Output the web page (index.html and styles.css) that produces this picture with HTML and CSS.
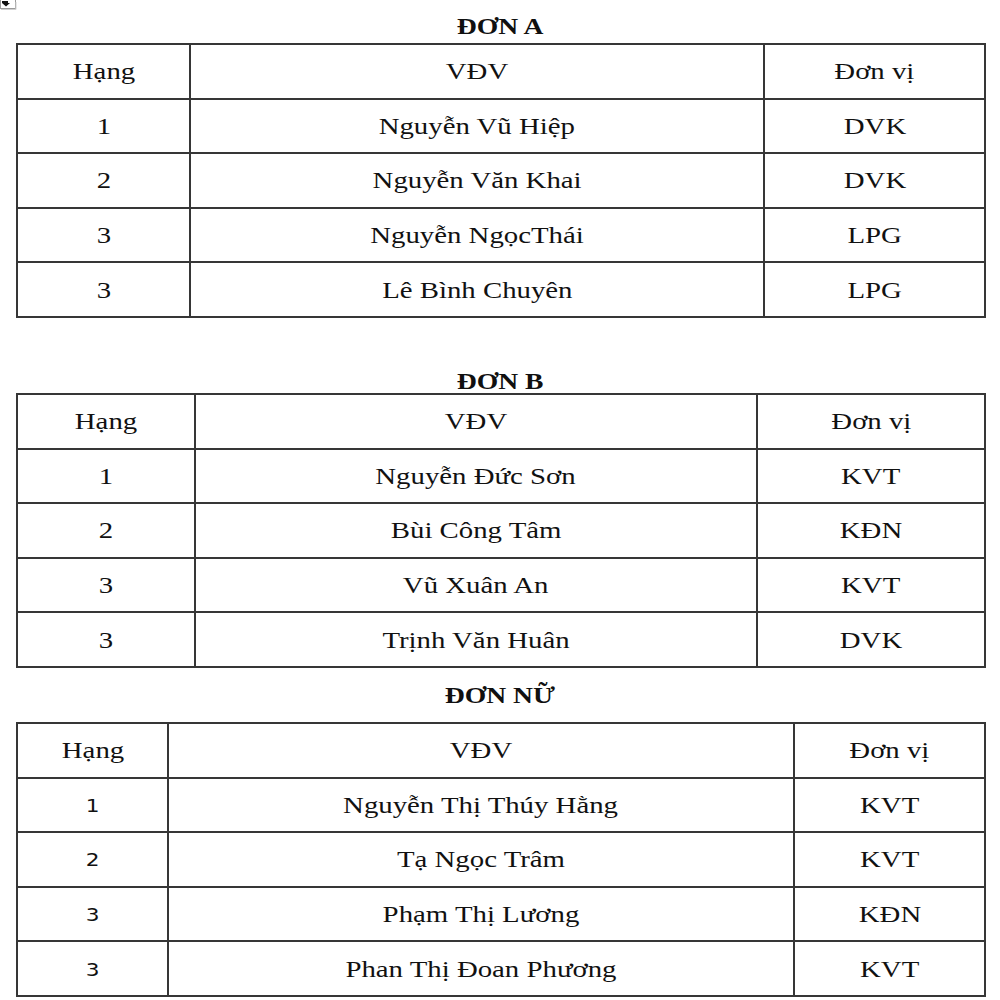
FILE: index.html
```html
<!DOCTYPE html>
<html lang="vi">
<head>
<meta charset="utf-8">
<title>Kết quả</title>
<link rel="stylesheet" href="styles.css">
</head>
<body>
<svg class="handle" width="17" height="10" viewBox="0 0 17 10">
  <rect x="0.5" y="-6" width="15" height="14.5" fill="#fff" stroke="#9a9a9a"/>
  <path d="M2 1 L8 1 L8 3 L10 3 L6 6.5 L2 3 Z" fill="#111"/>
  <path d="M16 2 L16 9.5 L1 9.5" fill="none" stroke="#d0d0d0"/>
</svg>
<main class="page">
  <section class="block block-a">
    <h2 class="title"><span class="sx">ĐƠN A</span></h2>
    <table class="grid grid-a">
      <colgroup><col class="c1"><col class="c2"><col class="c3"></colgroup>
      <tr><td><span class="sx">Hạng</span></td><td><span class="sx">VĐV</span></td><td><span class="sx">Đơn vị</span></td></tr>
      <tr><td><span class="sx">1</span></td><td><span class="sx">Nguyễn Vũ Hiệp</span></td><td><span class="sx">DVK</span></td></tr>
      <tr><td><span class="sx">2</span></td><td><span class="sx">Nguyễn Văn Khai</span></td><td><span class="sx">DVK</span></td></tr>
      <tr><td><span class="sx">3</span></td><td><span class="sx">Nguyễn NgọcThái</span></td><td><span class="sx">LPG</span></td></tr>
      <tr><td><span class="sx">3</span></td><td><span class="sx">Lê Bình Chuyên</span></td><td><span class="sx">LPG</span></td></tr>
    </table>
  </section>
  <section class="block block-b">
    <h2 class="title"><span class="sx">ĐƠN B</span></h2>
    <table class="grid grid-b">
      <colgroup><col class="c1"><col class="c2"><col class="c3"></colgroup>
      <tr><td><span class="sx">Hạng</span></td><td><span class="sx">VĐV</span></td><td><span class="sx">Đơn vị</span></td></tr>
      <tr><td><span class="sx">1</span></td><td><span class="sx">Nguyễn Đức Sơn</span></td><td><span class="sx">KVT</span></td></tr>
      <tr><td><span class="sx">2</span></td><td><span class="sx">Bùi Công Tâm</span></td><td><span class="sx">KĐN</span></td></tr>
      <tr><td><span class="sx">3</span></td><td><span class="sx">Vũ Xuân An</span></td><td><span class="sx">KVT</span></td></tr>
      <tr><td><span class="sx">3</span></td><td><span class="sx">Trịnh Văn Huân</span></td><td><span class="sx">DVK</span></td></tr>
    </table>
  </section>
  <section class="block block-c">
    <h2 class="title"><span class="sx">ĐƠN NỮ</span></h2>
    <table class="grid grid-c">
      <colgroup><col class="c1"><col class="c2"><col class="c3"></colgroup>
      <tr><td><span class="sx">Hạng</span></td><td><span class="sx">VĐV</span></td><td><span class="sx">Đơn vị</span></td></tr>
      <tr><td><span class="sx num">1</span></td><td><span class="sx">Nguyễn Thị Thúy Hằng</span></td><td><span class="sx">KVT</span></td></tr>
      <tr><td><span class="sx num">2</span></td><td><span class="sx">Tạ Ngọc Trâm</span></td><td><span class="sx">KVT</span></td></tr>
      <tr><td><span class="sx num">3</span></td><td><span class="sx">Phạm Thị Lương</span></td><td><span class="sx">KĐN</span></td></tr>
      <tr><td><span class="sx num">3</span></td><td><span class="sx">Phan Thị Đoan Phương</span></td><td><span class="sx">KVT</span></td></tr>
    </table>
  </section>
</main>
</body>
</html>
```

FILE: styles.css
```css
html, body {
  margin: 0;
  padding: 0;
  background: #ffffff;
}

body {
  font-family: "Liberation Serif", "Times New Roman", serif;
  color: #111111;
  position: relative;
}

.handle {
  position: absolute;
  left: 0;
  top: 0;
}

.page {
  display: flex;
  flex-direction: column;
  padding: 15px 16px 0 16px;
}

.title {
  margin: 0;
  font-size: 23px;
  line-height: 24px;
  font-weight: bold;
  text-align: center;
  color: #101010;
}

.sx {
  display: inline-block;
  transform: scaleX(1.2);
  transform-origin: center;
  white-space: nowrap;
}

.grid {
  width: 968px;
  border-collapse: collapse;
  table-layout: fixed;
}

.grid td {
  border: 2px solid #363636;
  height: 52.6px;
  padding: 0;
  text-align: center;
  vertical-align: middle;
  font-size: 24px;
  line-height: 26px;
}

.block-a .title { margin-bottom: 4px; }
.block-b { margin-top: 52px; }
.block-b .title { margin-bottom: -1px; }
.block-c { margin-top: 16px; }
.block-c .title { margin-bottom: 14px; }

.grid-a .c1 { width: 173px; }
.grid-a .c2 { width: 574px; }
.grid-a .c3 { width: 221px; }

.grid-b .c1 { width: 178px; }
.grid-b .c2 { width: 562px; }
.grid-b .c3 { width: 228px; }

.grid-c .c1 { width: 151px; }
.grid-c .c2 { width: 626px; }
.grid-c .c3 { width: 191px; }

.num {
  font-family: "DejaVu Sans", "Liberation Sans", sans-serif;
  font-size: 18px;
}
```
